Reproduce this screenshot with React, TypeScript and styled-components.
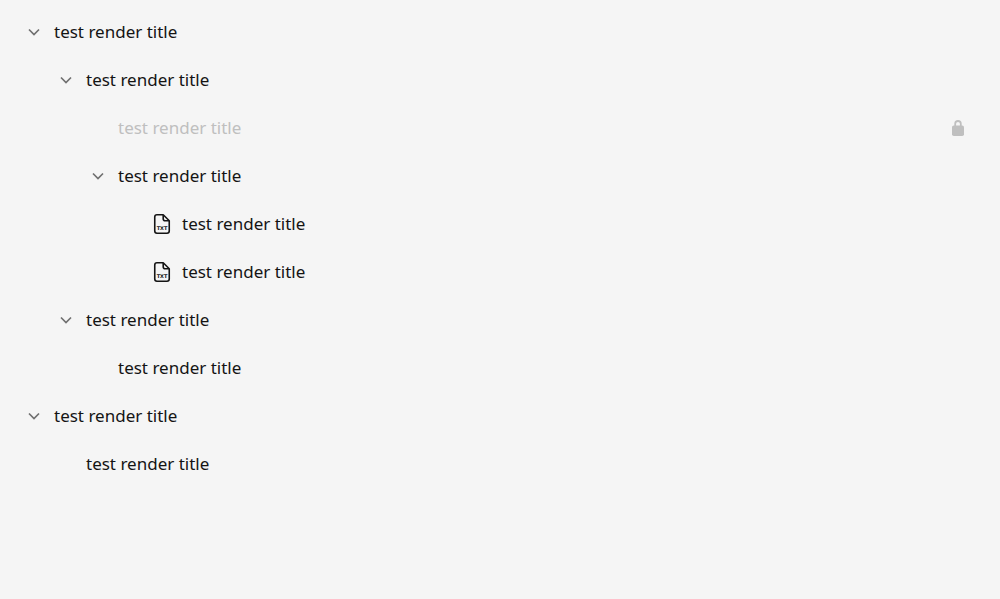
import React, { useState } from "react";
import styled, { createGlobalStyle } from "styled-components";

const GlobalStyle = createGlobalStyle`
  * { box-sizing: border-box; }
  body {
    margin: 0;
    background: #f5f5f5;
    color: #141414;
    font-family: "Noto Sans", "Open Sans", sans-serif;
  }
`;

const Page = styled.main`
  padding: 8px 30px 8px 22px;
`;

const Branch = styled.ul<{ $nested?: boolean }>`
  list-style: none;
  margin: 0;
  padding: 0 0 0 ${(p) => (p.$nested ? 32 : 0)}px;
`;

const Row = styled.div<{ $disabled?: boolean }>`
  display: flex;
  align-items: center;
  gap: 8px;
  height: 48px;
  color: ${(p) => (p.$disabled ? "#bfbfbf" : "inherit")};
`;

const Slot = styled.span`
  flex: none;
  width: 24px;
  height: 24px;
`;

const Toggle = styled.button<{ $open: boolean }>`
  flex: none;
  width: 24px;
  height: 24px;
  padding: 0;
  border: 0;
  background: none;
  color: #707070;
  cursor: pointer;

  svg {
    display: block;
    transform: ${(p) => (p.$open ? "none" : "rotate(-90deg)")};
  }
`;

const Icon = styled.svg`
  flex: none;
  display: block;
  width: 24px;
  height: 24px;
`;

const Title = styled.span`
  flex: 1;
  font-size: 17px;
  line-height: 24px;
`;

const Chevron = () => (
  <Icon viewBox="0 0 24 24" fill="none" aria-hidden="true">
    <path d="M7 9.5L12 14.5L17 9.5" stroke="currentColor" strokeWidth="1.7" />
  </Icon>
);

const TxtFile = () => (
  <Icon viewBox="0 0 24 24" fill="none" aria-hidden="true">
    <path
      d="M13.2 2.75H7A2.25 2.25 0 0 0 4.75 5V19A2.25 2.25 0 0 0 7 21.25H17A2.25 2.25 0 0 0 19.25 19V8.8L13.2 2.75V6.8A2 2 0 0 0 15.2 8.8H19.25"
      stroke="currentColor"
      strokeWidth="1.6"
      strokeLinejoin="round"
    />
    <text
      x="12"
      y="18"
      textAnchor="middle"
      fontFamily="'DejaVu Sans', sans-serif"
      fontSize="5"
      fontWeight="700"
      fill="currentColor"
    >
      TXT
    </text>
  </Icon>
);

const Lock = () => (
  <Icon viewBox="0 0 24 24" fill="none" role="img" aria-label="Locked">
    <rect x="6" y="9.4" width="12" height="10.6" rx="1.8" fill="currentColor" />
    <path d="M9.2 10V7.8A2.8 2.8 0 0 1 14.8 7.8V10" stroke="currentColor" strokeWidth="1.8" />
  </Icon>
);

type Node = {
  title: string;
  children?: Node[];
  file?: boolean;
  disabled?: boolean;
};

const title = "test render title";

const nodes: Node[] = [
  {
    title,
    children: [
      {
        title,
        children: [
          { title, disabled: true },
          { title, children: [{ title, file: true }, { title, file: true }] },
        ],
      },
      { title, children: [{ title }] },
    ],
  },
  { title, children: [{ title }] },
];

function TreeItem({ node }: { node: Node }) {
  const [open, setOpen] = useState(true);
  return (
    <li>
      <Row $disabled={node.disabled}>
        {node.children ? (
          <Toggle
            type="button"
            $open={open}
            aria-expanded={open}
            aria-label={node.title}
            onClick={() => setOpen(!open)}
          >
            <Chevron />
          </Toggle>
        ) : (
          <Slot />
        )}
        {node.file && <TxtFile />}
        <Title>{node.title}</Title>
        {node.disabled && <Lock />}
      </Row>
      {node.children && open && (
        <Branch $nested>
          {node.children.map((child, i) => (
            <TreeItem key={i} node={child} />
          ))}
        </Branch>
      )}
    </li>
  );
}

export default function App() {
  return (
    <Page>
      <GlobalStyle />
      <Branch>
        {nodes.map((node, i) => (
          <TreeItem key={i} node={node} />
        ))}
      </Branch>
    </Page>
  );
}
